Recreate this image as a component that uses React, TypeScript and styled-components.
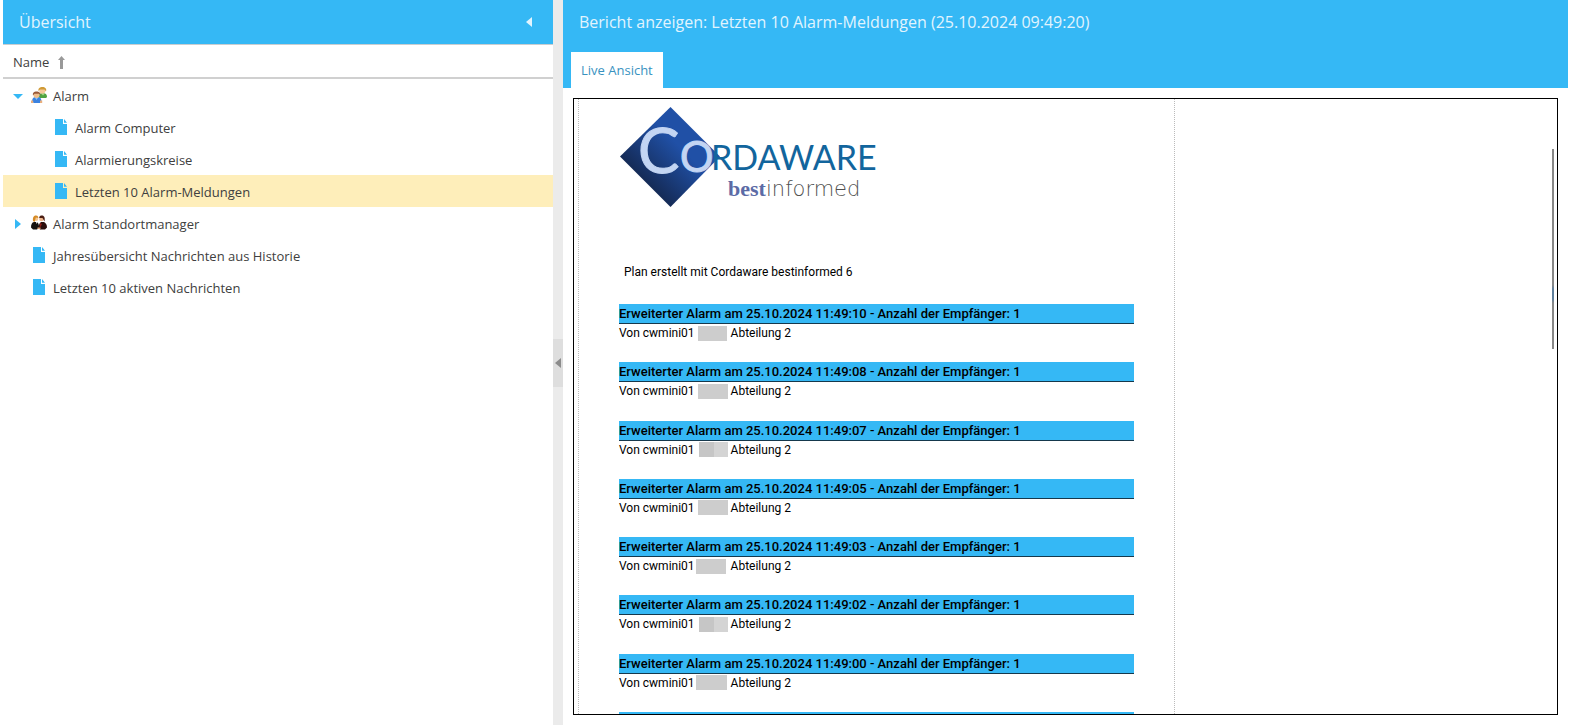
import React from "react";
import styled, { createGlobalStyle } from "styled-components";

const BLUE = "#35b8f5";

const GlobalStyle = createGlobalStyle`
  * { box-sizing: border-box; }
  body { margin: 0; background: #fff; font-family: "Open Sans", sans-serif; color: #404040; }
  button { font: inherit; color: inherit; border: 0; padding: 0; background: none; cursor: pointer; }
  h1, h2, h3, p, ul { margin: 0; padding: 0; }
  ul { list-style: none; }
`;

const Page = styled.div`
  display: grid;
  grid-template-columns: 550px 10px minmax(0, 1fr);
  height: 100vh;
  padding: 0 2px 0 3px;
  overflow: hidden;
`;

const Sidebar = styled.aside`
  display: flex;
  flex-direction: column;
`;

const TitleBar = styled.header`
  display: flex;
  align-items: center;
  justify-content: space-between;
  height: 44px;
  padding: 0 21px 0 16px;
  background: ${BLUE};
`;

const Title = styled.h2`
  font-size: 16px;
  line-height: 24px;
  font-weight: 400;
  color: #e1f4fe;
  white-space: nowrap;
`;

const IconButton = styled.button`
  display: flex;
`;

const ColumnHeader = styled.button`
  display: flex;
  align-items: center;
  gap: 9px;
  height: 35px;
  padding: 2px 10px 0;
  border-top: 1px solid #c8cdd0;
  border-bottom: 2px solid #d0d0d0;
  font-size: 13px;
  line-height: 20px;
`;

const Row = styled.button<{ $level: number; $selected?: boolean }>`
  display: flex;
  align-items: center;
  width: 100%;
  height: 32px;
  padding-top: 2px;
  padding-left: ${(p) => 8 + p.$level * 22}px;
  background: ${(p) => (p.$selected ? "#feeeba" : "transparent")};
  font-size: 13px;
  line-height: 20px;
  text-align: left;
  white-space: nowrap;
`;

const Expander = styled.span`
  display: flex;
  justify-content: center;
  width: 14px;
  margin-right: 6px;
`;

const NodeIcon = styled.span`
  display: flex;
  justify-content: center;
  width: 16px;
  margin-right: 6px;
`;

const Splitter = styled.div`
  display: flex;
  align-items: center;
  background: #ebebeb;
`;

const SplitterHandle = styled.button`
  display: flex;
  align-items: center;
  justify-content: center;
  width: 10px;
  height: 48px;
  background: #dedede;
`;

const Main = styled.main`
  display: flex;
  flex-direction: column;
  min-width: 0;
  min-height: 0;
`;

const TabBar = styled.nav`
  display: flex;
  padding: 8px 8px 0;
  background: ${BLUE};
`;

const Tab = styled.button`
  height: 36px;
  padding: 0 10px;
  background: #fff;
  color: #3892bf;
  font-size: 13px;
  line-height: 20px;
`;

const Viewer = styled.div`
  flex: 1;
  min-height: 0;
  padding: 10px;
`;

const Frame = styled.section`
  position: relative;
  height: 100%;
  padding-left: 4px;
  border: 1px solid #000;
  overflow: hidden;
`;

const ScrollThumb = styled.span`
  position: absolute;
  top: 50px;
  right: 3px;
  width: 2px;
  height: 200px;
  background: linear-gradient(#888 68%, #5f7f9c 70%, #5f7f9c 75%, #888 77%);
`;

const Sheet = styled.article`
  width: 597px;
  padding: 7px 40px 0;
  border: dotted #bbb;
  border-width: 0 1px;
  font-family: Roboto, sans-serif;
  color: #000;
`;

const LogoImage = styled.svg`
  display: block;
`;

const Intro = styled.p`
  padding: 54px 5px 0;
  font-size: 12px;
  line-height: 20px;
`;

const Entries = styled.div`
  display: grid;
  grid-template-rows: repeat(8, 1fr);
  height: 466px;
  margin-top: 22px;
`;

const Bar = styled.h3`
  height: 20px;
  border-bottom: 1px solid #15384c;
  background: ${BLUE};
  font-size: 13px;
  line-height: 20px;
  font-weight: 500;
`;

const Sender = styled.p`
  display: flex;
  align-items: center;
  font-size: 12px;
  line-height: 18px;
`;

const Redacted = styled.span<{ $start: number; $width: number; $split?: boolean }>`
  flex: none;
  width: 36px;
  height: 15px;
  padding-left: ${(p) => p.$start}px;

  &::before {
    content: "";
    display: block;
    width: ${(p) => p.$width}px;
    height: 15px;
    background: ${(p) => (p.$split ? "linear-gradient(90deg, #c6c6c6 50%, #d4d4d4 50%)" : "#cdcdcd")};
  }
`;

const Triangle = ({ dir, color }: { dir: "left" | "right" | "down"; color: string }) => {
  if (dir === "down")
    return (
      <svg width="10" height="5" viewBox="0 0 10 5" aria-hidden="true">
        <path d="M0 0h10L5 5z" fill={color} />
      </svg>
    );
  return (
    <svg width="6" height="10" viewBox="0 0 6 10" aria-hidden="true">
      <path d={dir === "left" ? "M6 0v10L0 5z" : "M0 0v10L6 5z"} fill={color} />
    </svg>
  );
};

const SortArrow = () => (
  <svg width="7" height="13" viewBox="0 0 7 13" aria-hidden="true">
    <path d="M3.5 0L7 4H5v9H2V4H0z" fill="#999" />
  </svg>
);

const FileIcon = () => (
  <svg width="12" height="18" viewBox="0 0 12 18" aria-hidden="true">
    <path d="M0 0h8v5h4v11H0z" fill={BLUE} />
    <path d="M9 0l3 3.8H9z" fill={BLUE} />
  </svg>
);

const TeamIcon = () => (
  <svg width="16" height="18" viewBox="0 0 16 18" aria-hidden="true">
    <path d="M8 10.500V9C8 7 9.500 6 11.500 6S16 7 16 9.500c0 1-1 1.500-2 1.500H9z" fill="#4fa341" />
    <path d="M10 6.500h4l-2 2z" fill="#a4d884" />
    <circle cx="11.300" cy="3.800" r="3" fill="#f4c99a" />
    <path d="M7.500 4C7 1 9 0 11.500 0S16 1.500 15 4.500L13.500 2.500H9z" fill="#d09a35" />
    <path d="M1 15c0-3 1-4.500 3-5h3.500c2 .5 3 2 3 5l-1.500 1h-6z" fill="#3a82e0" />
    <path d="M3.500 10h4L5.500 13z" fill="#8fc4f5" />
    <path d="M0 13.500h2.200V16H0zM9 13.500h2.200V16H9z" fill="#e9ae7c" />
    <circle cx="5.500" cy="8" r="3" fill="#efbd8c" />
    <path d="M2 8.500C1.500 5.500 3 4.500 5.500 4.500S9.800 5.500 9.300 8.500L8 6.800H3.500z" fill="#9a5a38" />
  </svg>
);

const ManagersIcon = () => (
  <svg width="16" height="18" viewBox="0 0 16 18" aria-hidden="true">
    <path d="M0 12.500c0-3.500 1-5 3-5.500h3c1.700 1 2 3 2 5.500L6 14.500H2z" fill="#15120f" />
    <path d="M7.800 13c0-4 1-5 2.200-6h3c2 1 3 3 3 5.500l-2 2H9z" fill="#2a0d0b" />
    <path d="M9 8l2 1-1.500 3H8.500z" fill="#8d1c16" />
    <path d="M5 7h1.500l-.7 2z" fill="#fff" />
    <circle cx="5" cy="3.800" r="2.300" fill="#f6c894" />
    <path d="M2 6C1.500 2 3 .5 5 .5S7.500 2 7.300 3L4.800 2.500 3.700 7z" fill="#d58a25" />
    <circle cx="10.500" cy="4" r="2.300" fill="#efb68b" />
    <path d="M8.200 3C8.200 1 9.500.5 11 .5S14.500 2 13.500 6.500L11.500 3z" fill="#4b1d12" />
    <path d="M6.500 12.500h3v1.500h-3z" fill="#e2a476" />
  </svg>
);

const Logo = () => (
  <LogoImage width="258" height="102" viewBox="0 0 258 102" role="img" aria-label="Cordaware bestinformed">
    <defs>
      <linearGradient id="diamond" x1="0.2" y1="0.8" x2="0.6" y2="0.4">
        <stop offset="0" stopColor="#13254a" />
        <stop offset="1" stopColor="#2050a6" />
      </linearGradient>
      <linearGradient id="ring" gradientUnits="userSpaceOnUse" x1="62" y1="0" x2="104" y2="0">
        <stop offset="0.7" stopColor="#c3d5f3" />
        <stop offset="0.85" stopColor="#6d9fce" />
      </linearGradient>
    </defs>
    <path d="M51.500 1L101 50.500 51.500 101 1 50.500z" fill="url(#diamond)" />
    <g fontFamily="Lato, sans-serif">
      <text x="19" y="67" fontSize="62" fill="#c3d5f3" stroke="#c3d5f3">C</text>
      <text x="61" y="66" fontSize="42" fill="url(#ring)" stroke="url(#ring)">O</text>
      <text x="92" y="64" fontSize="34" fill="#12659d">RDAWARE</text>
    </g>
    <text x="109" y="90" fontFamily="Liberation Serif, serif" fontWeight="700" fontSize="22" fill="#5c6ba6">best</text>
    <text x="147" y="90" fontFamily="DejaVu Sans, sans-serif" fontWeight="200" fontSize="21" fill="#505050">informed</text>
  </LogoImage>
);

type Node = { label: string; level: number; icon: "team" | "managers" | "file"; open?: boolean; selected?: boolean };

const nodes: Node[] = [
  { label: "Alarm", level: 0, icon: "team", open: true },
  { label: "Alarm Computer", level: 1, icon: "file" },
  { label: "Alarmierungskreise", level: 1, icon: "file" },
  { label: "Letzten 10 Alarm-Meldungen", level: 1, icon: "file", selected: true },
  { label: "Alarm Standortmanager", level: 0, icon: "managers", open: false },
  { label: "Jahresübersicht Nachrichten aus Historie", level: 0, icon: "file" },
  { label: "Letzten 10 aktiven Nachrichten", level: 0, icon: "file" },
];

const icons = { team: <TeamIcon />, managers: <ManagersIcon />, file: <FileIcon /> };

const alarms = [
  { time: "11:49:10", start: 3, width: 29 },
  { time: "11:49:08", start: 3, width: 30 },
  { time: "11:49:07", start: 4, width: 29, split: true },
  { time: "11:49:05", start: 3, width: 30 },
  { time: "11:49:03", start: 1, width: 30 },
  { time: "11:49:02", start: 4, width: 29, split: true },
  { time: "11:49:00", start: 1, width: 31 },
];

export default function App() {
  return (
    <>
      <GlobalStyle />
      <Page>
        <Sidebar>
          <TitleBar>
            <Title>Übersicht</Title>
            <IconButton aria-label="Übersicht einklappen">
              <Triangle dir="left" color="#e1f4fe" />
            </IconButton>
          </TitleBar>
          <ColumnHeader>
            Name <SortArrow />
          </ColumnHeader>
          <ul>
            {nodes.map((n) => (
              <li key={n.label}>
                <Row $level={n.level} $selected={n.selected} aria-expanded={n.open}>
                  <Expander>
                    {n.open !== undefined && <Triangle dir={n.open ? "down" : "right"} color={BLUE} />}
                  </Expander>
                  <NodeIcon>{icons[n.icon]}</NodeIcon>
                  {n.label}
                </Row>
              </li>
            ))}
          </ul>
        </Sidebar>
        <Splitter>
          <SplitterHandle aria-label="Seitenleiste umschalten">
            <Triangle dir="left" color="#8c8c8c" />
          </SplitterHandle>
        </Splitter>
        <Main>
          <TitleBar>
            <Title>Bericht anzeigen: Letzten 10 Alarm-Meldungen (25.10.2024 09:49:20)</Title>
          </TitleBar>
          <TabBar>
            <Tab>Live Ansicht</Tab>
          </TabBar>
          <Viewer>
            <Frame>
              <Sheet>
                <Logo />
                <Intro>Plan erstellt mit Cordaware bestinformed 6</Intro>
                <Entries>
                  {alarms.map((a) => (
                    <div key={a.time}>
                      <Bar>Erweiterter Alarm am 25.10.2024 {a.time} - Anzahl der Empfänger: 1</Bar>
                      <Sender>
                        Von cwmini01
                        <Redacted $start={a.start} $width={a.width} $split={a.split} />
                        Abteilung 2
                      </Sender>
                    </div>
                  ))}
                  <Bar aria-hidden="true" />
                </Entries>
              </Sheet>
              <ScrollThumb />
            </Frame>
          </Viewer>
        </Main>
      </Page>
    </>
  );
}
